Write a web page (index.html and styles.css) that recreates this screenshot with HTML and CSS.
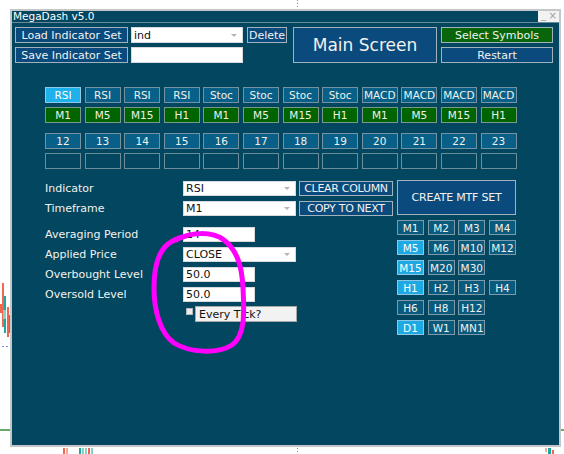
FILE: index.html
```html
<!DOCTYPE html>
<html>
<head>
<meta charset="utf-8">
<title>MegaDash v5.0</title>
<link rel="stylesheet" href="styles.css">
</head>
<body>
<div class="chart">
  <span class="mark dots dots-top"></span>
  <span class="mark dots dots-bottom"></span>
  <span class="mark level level-l"></span>
  <span class="mark level level-r"></span>
  <span class="mark blue-dash"></span>
  <span class="mark bar red" style="left:2px;top:283px;height:44px"></span>
  <span class="mark bar red" style="left:0px;top:304px;height:9px"></span>
  <span class="mark bar teal" style="left:4px;top:296px;height:37px"></span>
  <span class="mark bar teal-l" style="left:3px;top:310px;height:9px;width:3px"></span>
  <span class="mark bar red" style="left:7px;top:307px;height:30px"></span>
  <span class="mark bar teal" style="left:9px;top:315px;height:18px"></span>
  <span class="mark bar red" style="left:63px;top:448px;height:6px"></span>
  <span class="mark bar red-l" style="left:66px;top:448px;height:6px"></span>
  <span class="mark bar teal" style="left:79px;top:448px;height:6px"></span>
  <span class="mark bar teal-l" style="left:82px;top:448px;height:6px"></span>
  <span class="mark bar teal-l" style="left:85px;top:448px;height:6px"></span>
  <span class="mark bar red" style="left:88px;top:448px;height:6px"></span>
  <span class="mark bar teal-l" style="left:91px;top:448px;height:6px"></span>
  <span class="mark bar red-l" style="left:545px;top:448px;height:4px"></span>
  <span class="mark bar teal" style="left:548px;top:448px;height:6px;width:3px"></span>
  <span class="mark bar red" style="left:552px;top:450px;height:4px"></span>
</div>

<div class="window">
  <div class="titlebar">
    <div class="title">MegaDash v5.0</div>
    <div class="ctrls"><span class="min">_</span><span class="close">×</span></div>
  </div>

  <div class="top">
    <div class="setcol">
      <div class="setrow">
        <div class="btn set-btn">Load Indicator Set</div>
        <div class="field combo set-input"><span>ind</span><i class="caret"></i></div>
        <div class="btn del-btn">Delete</div>
      </div>
      <div class="setrow">
        <div class="btn set-btn">Save Indicator Set</div>
        <div class="field set-input"></div>
      </div>
    </div>
    <div class="btn main-btn">Main Screen</div>
    <div class="rightcol">
      <div class="btn green-btn">Select Symbols</div>
      <div class="btn">Restart</div>
    </div>
  </div>

  <div class="grid">
    <div class="cell on">RSI</div><div class="cell">RSI</div><div class="cell">RSI</div><div class="cell">RSI</div>
    <div class="cell">Stoc</div><div class="cell">Stoc</div><div class="cell">Stoc</div><div class="cell">Stoc</div>
    <div class="cell">MACD</div><div class="cell">MACD</div><div class="cell">MACD</div><div class="cell">MACD</div>
    <div class="cell tf">M1</div><div class="cell tf">M5</div><div class="cell tf">M15</div><div class="cell tf">H1</div>
    <div class="cell tf">M1</div><div class="cell tf">M5</div><div class="cell tf">M15</div><div class="cell tf">H1</div>
    <div class="cell tf">M1</div><div class="cell tf">M5</div><div class="cell tf">M15</div><div class="cell tf">H1</div>
  </div>
  <div class="grid grid-lower">
    <div class="cell">12</div><div class="cell">13</div><div class="cell">14</div><div class="cell">15</div>
    <div class="cell">16</div><div class="cell">17</div><div class="cell">18</div><div class="cell">19</div>
    <div class="cell">20</div><div class="cell">21</div><div class="cell">22</div><div class="cell">23</div>
    <div class="cell empty"></div><div class="cell empty"></div><div class="cell empty"></div><div class="cell empty"></div>
    <div class="cell empty"></div><div class="cell empty"></div><div class="cell empty"></div><div class="cell empty"></div>
    <div class="cell empty"></div><div class="cell empty"></div><div class="cell empty"></div><div class="cell empty"></div>
  </div>

  <div class="form">
    <div class="fields">
      <div class="frow">
        <span class="lbl">Indicator</span>
        <div class="field combo wide"><span>RSI</span><i class="caret"></i></div>
        <div class="btn side-btn">CLEAR COLUMN</div>
      </div>
      <div class="frow">
        <span class="lbl">Timeframe</span>
        <div class="field combo wide"><span>M1</span><i class="caret"></i></div>
        <div class="btn side-btn">COPY TO NEXT</div>
      </div>
      <div class="frow frow-gap">
        <span class="lbl">Averaging Period</span>
        <div class="field num"><span>14</span></div>
      </div>
      <div class="frow">
        <span class="lbl">Applied Price</span>
        <div class="field combo wide"><span>CLOSE</span><i class="caret"></i></div>
      </div>
      <div class="frow">
        <span class="lbl">Overbought Level</span>
        <div class="field num"><span>50.0</span></div>
      </div>
      <div class="frow">
        <span class="lbl">Oversold Level</span>
        <div class="field num"><span>50.0</span></div>
      </div>
      <div class="checkrow">
        <span class="chk"></span>
        <span class="tick">Every Tick?</span>
      </div>
    </div>
    <div class="mtf">
      <div class="btn create-btn">CREATE MTF SET</div>
      <div class="tfgrid">
        <div class="tfb">M1</div><div class="tfb">M2</div><div class="tfb">M3</div><div class="tfb">M4</div>
        <div class="tfb on">M5</div><div class="tfb">M6</div><div class="tfb">M10</div><div class="tfb">M12</div>
        <div class="tfb on">M15</div><div class="tfb">M20</div><div class="tfb">M30</div><div class="blank"></div>
        <div class="tfb on">H1</div><div class="tfb">H2</div><div class="tfb">H3</div><div class="tfb">H4</div>
        <div class="tfb">H6</div><div class="tfb">H8</div><div class="tfb">H12</div><div class="blank"></div>
        <div class="tfb on">D1</div><div class="tfb">W1</div><div class="tfb">MN1</div><div class="blank"></div>
      </div>
    </div>
  </div>
</div>

<svg class="ink" width="564" height="454" viewBox="0 0 564 454">
  <path d="M176 240 C190 232 212 231 224 240 C238 251 242 268 243 288 C244 310 246 335 232 345 C218 354 190 353 174 343 C160 333 154 310 154 288 C154 268 158 252 168 244 C172 241 178 238 186 236" fill="none" stroke="#ff00ff" stroke-width="5" stroke-linecap="round" stroke-linejoin="round"/>
</svg>
</body>
</html>
```

FILE: styles.css
```css
* { box-sizing: border-box; }

html, body {
  margin: 0;
  padding: 0;
  background: #ffffff;
}

body {
  position: relative;
  width: 564px;
  height: 454px;
  overflow: hidden;
  font-family: "DejaVu Sans", "Liberation Sans", sans-serif;
  font-size: 11px;
  color: #f0f2ee;
}

/* chart remnants behind the window */
.chart { position: absolute; left: 0; top: 0; width: 564px; height: 454px; }
.mark { position: absolute; display: block; }
.dots { width: 1px; background: repeating-linear-gradient(#8a8a8a 0 1px, transparent 1px 3px); }
.dots-top { left: 297px; top: 0; height: 8px; }
.dots-bottom { left: 297px; top: 448px; height: 6px; }
.level { top: 429px; height: 2px; background: #6aa86a; }
.level-l { left: 0; width: 10px; }
.level-r { left: 561px; width: 3px; }
.blue-dash { left: 2px; top: 346px; width: 7px; height: 1px; background: repeating-linear-gradient(90deg, #7a8cf0 0 2px, transparent 2px 4px); }
.bar { width: 2px; }
.red { background: #f0664e; }
.red-l { background: #f8a898; }
.teal { background: #1aa8a0; }
.teal-l { background: #88d0cc; }

/* window */
.window {
  position: relative;
  margin: 9px 0 0 10px;
  width: 551px;
  height: 438px;
  border: 2px solid #c3c7c8;
  background: #03465f;
}

.titlebar {
  display: flex;
  height: 12px;
  border-bottom: 1px solid #6a8a98;
}
.title {
  flex: 1;
  padding-left: 1px;
  font-size: 10.5px;
  line-height: 11px;
  color: #ffffff;
  background: #03465f;
}
.ctrls {
  width: 21px;
  display: flex;
  justify-content: space-between;
  padding: 0 2px 0 3px;
  background: #f2f2f2;
  color: #a0a0a0;
  font-size: 10px;
  line-height: 10px;
}
.ctrls .min { line-height: 8px; }

/* buttons and fields */
.btn {
  display: flex;
  align-items: center;
  justify-content: center;
  height: 16px;
  border: 1px solid #a0b3bd;
  background: #0b4a7d;
  color: #f2f2ee;
  white-space: nowrap;
}
.field {
  display: flex;
  align-items: center;
  height: 16px;
  padding-left: 2px;
  border: 1px solid #d6dadc;
  background: #ffffff;
  color: #111111;
  white-space: nowrap;
}
.caret {
  margin-left: auto;
  margin-right: 5px;
  width: 0;
  height: 0;
  border-left: 3px solid transparent;
  border-right: 3px solid transparent;
  border-top: 3px solid #b4b4b4;
}

/* top section */
.top {
  display: flex;
  padding: 4px 0 0 3px;
}
.setrow { display: flex; height: 16px; }
.setrow + .setrow { margin-top: 4px; }
.set-btn { width: 113px; }
.set-input { width: 112px; margin-left: 3px; }
.del-btn { width: 40px; margin-left: 4px; }
.main-btn {
  width: 144px;
  height: 36px;
  margin-left: 6px;
  font-size: 17px;
}
.rightcol {
  display: flex;
  flex-direction: column;
  gap: 4px;
  width: 112px;
  margin-left: 4px;
}
.green-btn { background: #08650a; }

/* indicator grid */
.grid {
  display: grid;
  grid-template-columns: repeat(12, 36px);
  grid-auto-rows: 16px;
  column-gap: 3.6px;
  row-gap: 4px;
  width: 472px;
  margin: 24px 0 0 33px;
}
.grid-lower { margin-top: 10px; }
.cell {
  display: flex;
  align-items: center;
  justify-content: center;
  border: 1px solid #7393a2;
  background: #086088;
  font-size: 10.5px;
  color: #f0f2ea;
  white-space: nowrap;
}
.cell.on { background: #1fb1eb; border-color: #8fcbe6; color: #ffffff; }
.cell.tf { background: #006400; border-color: #7a9888; }
.cell.empty { background: transparent; border-color: #6c8c9a; }

/* form */
.form {
  display: flex;
  margin: 11px 0 0 33px;
}
.fields {
  width: 348px;
  padding-top: 1px;
}
.frow {
  display: flex;
  align-items: center;
  height: 15px;
  margin-top: 5px;
}
.frow:first-child { margin-top: 0; }
.frow-gap { margin-top: 11px; }
.frow .field { height: 15px; }
.lbl { width: 138px; color: #f2f2ee; white-space: nowrap; }
.wide { width: 113px; }
.num { width: 72px; }
.side-btn {
  width: 94px;
  height: 15px;
  margin-left: 3px;
  letter-spacing: -0.3px;
}
.checkrow {
  display: flex;
  align-items: center;
  height: 16px;
  margin-top: 4px;
  padding-left: 141px;
}
.chk {
  width: 7px;
  height: 7px;
  margin: -6px 2px 0 0;
  border: 1px solid #b4b8ba;
  background: #ececec;
}
.tick {
  display: flex;
  align-items: center;
  width: 102px;
  height: 16px;
  padding-left: 3px;
  border: 1px solid #a8a8a8;
  background: #f2f2f2;
  color: #111111;
}

.mtf {
  width: 119px;
  margin-left: 4px;
}
.create-btn {
  width: 119px;
  height: 35px;
  letter-spacing: -0.2px;
}
.tfgrid {
  display: grid;
  grid-template-columns: repeat(4, 27px);
  grid-auto-rows: 15px;
  column-gap: 3.67px;
  row-gap: 5px;
  margin-top: 5px;
}
.tfb {
  display: flex;
  align-items: center;
  justify-content: center;
  border: 1px solid #7c9aa8;
  background: #0a5a7e;
  font-size: 10.5px;
  color: #f0f2ea;
  white-space: nowrap;
}
.tfb.on { background: #1ea9e3; border-color: #8cc8e4; color: #ffffff; }

/* annotation overlay */
.ink {
  position: absolute;
  left: 0;
  top: 0;
  pointer-events: none;
}
```
